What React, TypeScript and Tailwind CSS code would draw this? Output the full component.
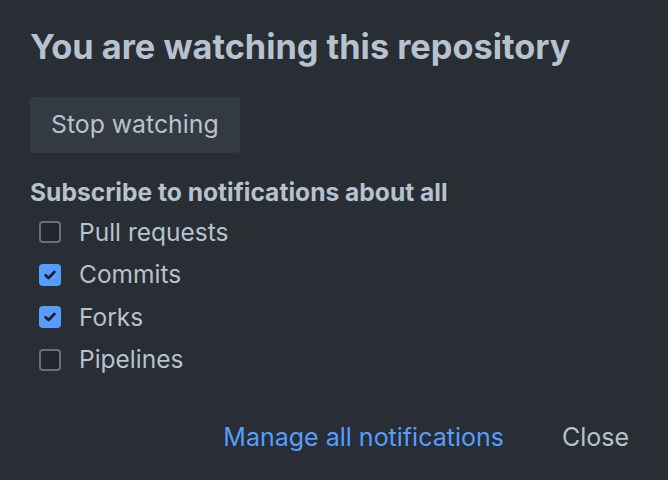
import { useState } from 'react';

const options = [
  { id: 'pr', label: 'Pull requests', checked: false },
  { id: 'commits', label: 'Commits', checked: true },
  { id: 'forks', label: 'Forks', checked: true },
  { id: 'pipelines', label: 'Pipelines', checked: false },
];

function Checkbox({ checked, onChange }: { checked: boolean; onChange: () => void }) {
  return (
    <button
      onClick={onChange}
      className={
        checked
          ? 'flex h-[22px] w-[22px] items-center justify-center rounded-[4px] bg-[#579dff]'
          : 'flex h-[22px] w-[22px] items-center justify-center rounded-[4px] border-2 border-[#66717e] bg-[#22272b]'
      }
    >
      {checked && (
        <svg width="14" height="14" viewBox="0 0 14 14" fill="none">
          <path d="M2.6 7.3l2.9 2.7 5.9-6" stroke="#1d2125" strokeWidth="2.8" strokeLinecap="round" strokeLinejoin="round" />
        </svg>
      )}
    </button>
  );
}

export default function App() {
  const [state, setState] = useState(options);

  return (
    <div
      className="h-[480px] w-[668px] bg-[#282e33] text-[#b6c2cf]"
      style={{ fontFamily: 'Inter, "Noto Sans", sans-serif' }}
    >
      <div className="flex h-full flex-col px-[30px] pt-[24px]">
        <h1 className="text-[34.3px] font-bold leading-[46px]">You are watching this repository</h1>

        <div className="mt-[27px]">
          <button className="h-[56px] rounded-[4px] bg-[#333a41] px-[21px] text-[24.8px]">Stop watching</button>
        </div>

        <h2 className="mt-[24px] text-[24.6px] font-bold leading-[30px]">Subscribe to notifications about all</h2>

        <div className="mt-[4px] flex flex-col">
          {state.map((o) => (
            <label key={o.id} className="flex h-[42.5px] items-center gap-[18px] pl-[9px] text-[24.5px]">
              <Checkbox
                checked={o.checked}
                onChange={() =>
                  setState((s) => s.map((x) => (x.id === o.id ? { ...x, checked: !x.checked } : x)))
                }
              />
              <span>{o.label}</span>
            </label>
          ))}
        </div>

        <div className="mt-auto mb-[24px] flex items-center justify-end gap-[58px] pr-[9px] text-[25px]">
          <a className="text-[#579dff]">Manage all notifications</a>
          <button>Close</button>
        </div>
      </div>
    </div>
  );
}
